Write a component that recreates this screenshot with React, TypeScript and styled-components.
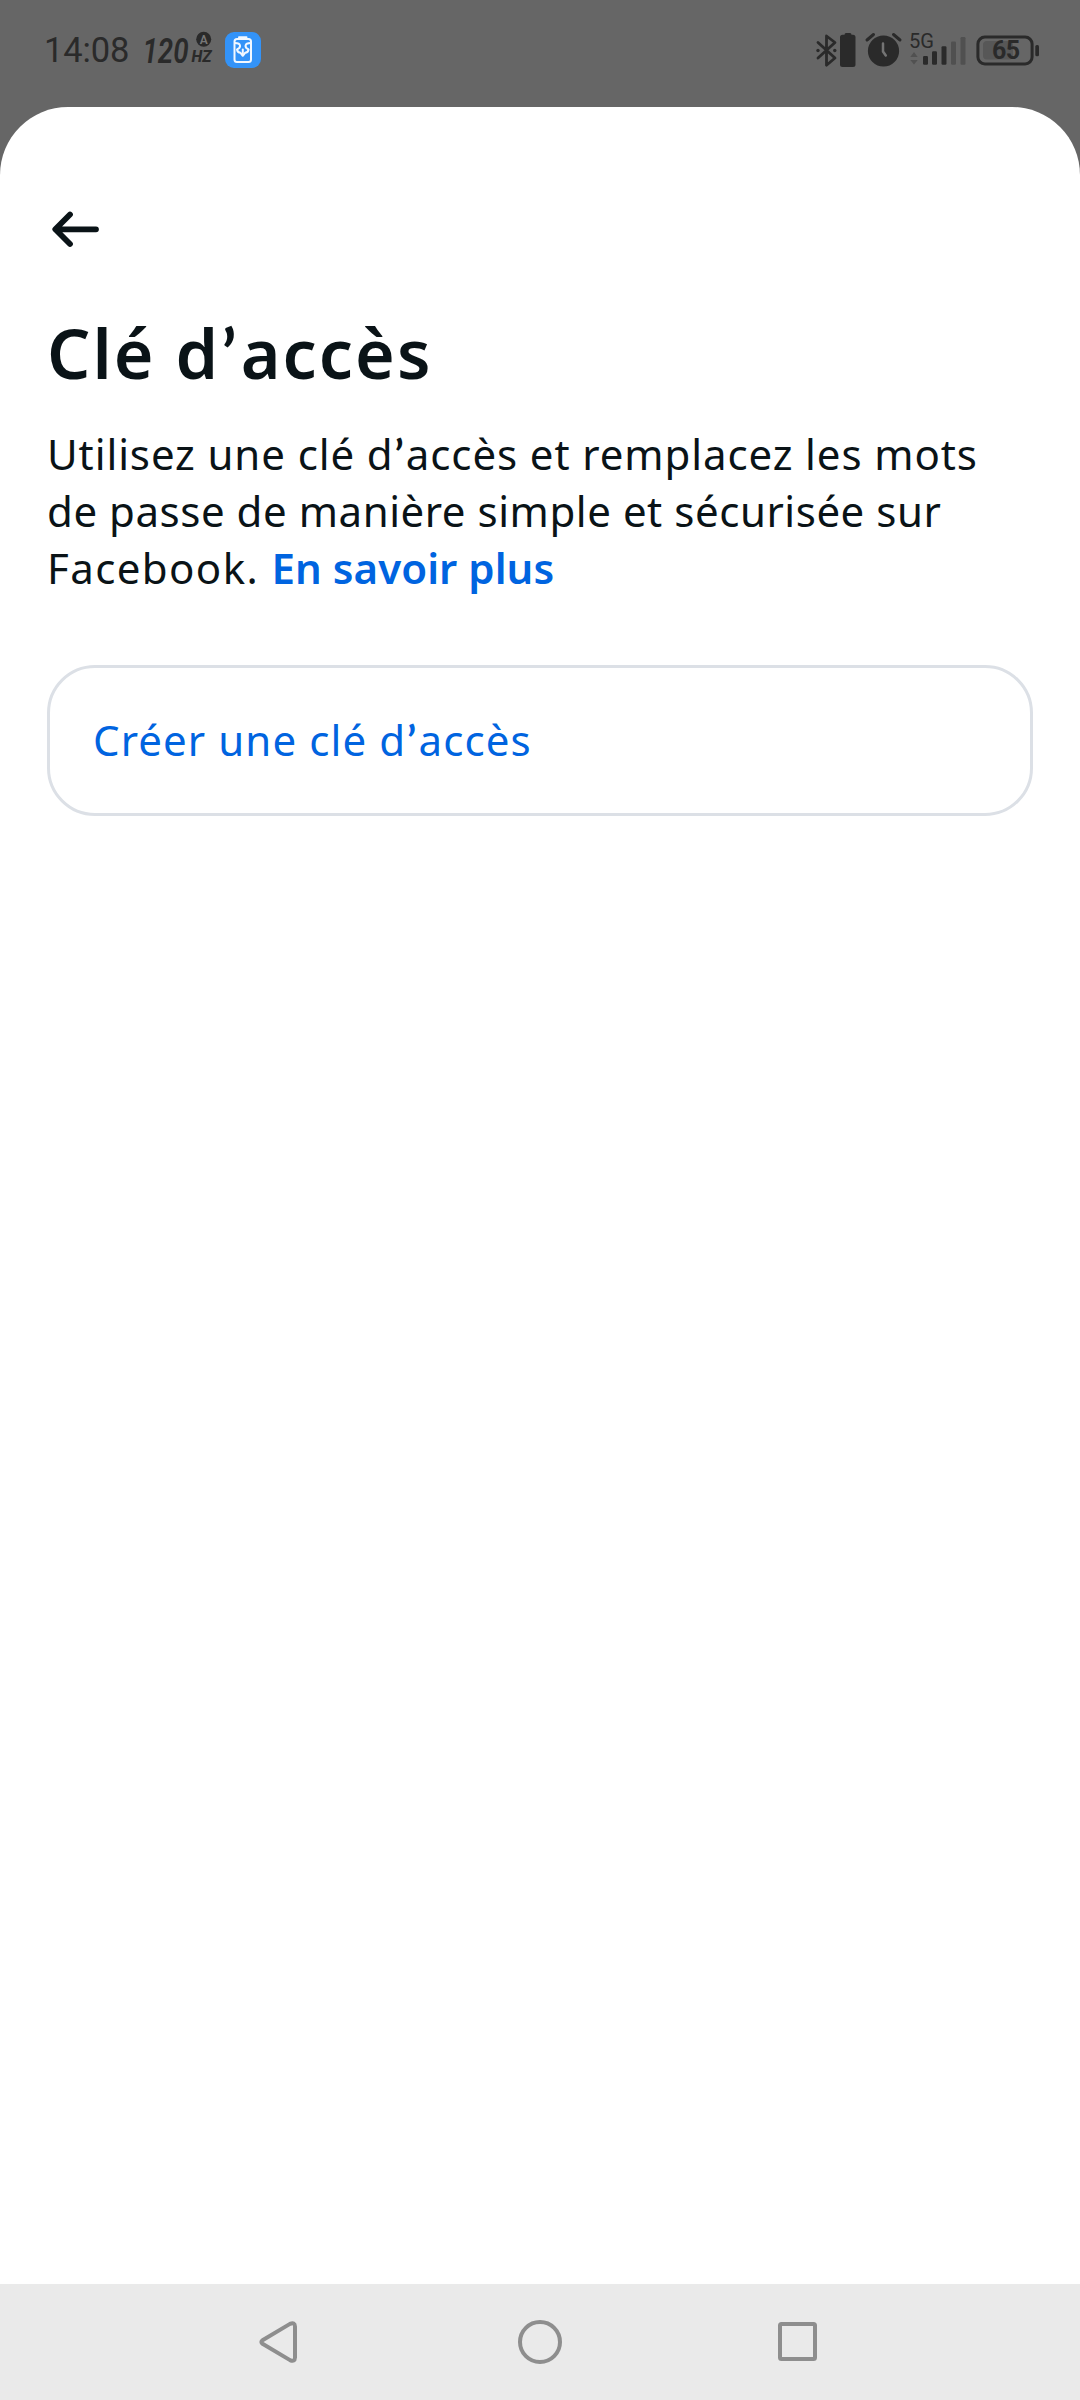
import React from "react";
import styled, { createGlobalStyle } from "styled-components";

const INK = "#0a1317";
const LINK = "#0064e0";
const STATUS_INK = "#2a2a2a";

const GlobalStyle = createGlobalStyle`
  *, *::before, *::after { box-sizing: border-box; }
  body { margin: 0; background: #666666; font-family: "Noto Sans", "Open Sans", sans-serif; }
`;

const Screen = styled.div`
  display: flex;
  flex-direction: column;
  width: 1080px;
  height: 2400px;
  overflow: hidden;
  background: #666666;
`;

const StatusBar = styled.header`
  display: flex;
  justify-content: space-between;
  align-items: flex-start;
  height: 107px;
  padding: 30px 40px 0 44px;
`;

const StatusGroup = styled.div`
  display: flex;
  align-items: center;
  height: 40px;
`;

const Clock = styled.time`
  width: 98px;
  font: 400 34.5px/40px Roboto, sans-serif;
  letter-spacing: -0.1px;
  color: ${STATUS_INK};
  white-space: nowrap;
`;

const Glyph = styled.svg<{ $gap?: number }>`
  display: block;
  flex: none;
  overflow: visible;
  margin-right: ${({ $gap = 0 }) => $gap}px;
`;

const Sheet = styled.main`
  display: flex;
  flex-direction: column;
  flex: 1;
  padding: 96px 47px 0;
  border-radius: 68px 68px 0 0;
  background: #ffffff;
`;

const BackButton = styled.button`
  display: flex;
  align-items: center;
  width: 56px;
  height: 52px;
  padding: 0;
  border: 0;
  background: none;
`;

const Title = styled.h1`
  margin: 54px 0 0;
  font-size: 68px;
  font-weight: 600;
  line-height: 88px;
  letter-spacing: 2.1px;
  color: ${INK};
  white-space: nowrap;
`;

const Intro = styled.p`
  margin: 28px 0 0;
  font-size: 42px;
  line-height: 57px;
  color: ${INK};
`;

const Line = styled.span<{ $tracking: number }>`
  display: block;
  letter-spacing: ${({ $tracking }) => $tracking}px;
  white-space: nowrap;
`;

const Apostrophe = styled.span`
  margin: 0 0.03em 0 0.02em;
  font-family: Lato, "Noto Sans", sans-serif;
  font-weight: 700;
  line-height: 1;
`;

const LearnMore = styled.a<{ $tracking: number }>`
  font-weight: 600;
  letter-spacing: ${({ $tracking }) => $tracking}px;
  color: ${LINK};
`;

const CreateCard = styled.button`
  display: flex;
  align-items: center;
  height: 151px;
  margin: 69px 0 0;
  padding: 0 43px 2px;
  border: 3px solid #dce0e6;
  border-radius: 48px;
  background: #ffffff;
  font-family: inherit;
  font-size: 42px;
  line-height: 57px;
  letter-spacing: 1.1px;
  color: ${LINK};
`;

const NavBar = styled.nav`
  display: flex;
  justify-content: space-between;
  align-items: center;
  height: 116px;
  padding: 0 258px;
  background: #eaeaea;
`;

function RefreshRate() {
  return (
    <Glyph width="74" height="40" viewBox="142 30 74 40" $gap={9}>
      <g fill={STATUS_INK} fontFamily="Roboto, sans-serif" fontStyle="italic">
        <text x="142.500" y="63" fontSize="35" fontWeight="600" textLength="46" lengthAdjust="spacingAndGlyphs">120</text>
        <text x="191.500" y="62" fontSize="16.500" fontWeight="800" textLength="20" lengthAdjust="spacingAndGlyphs">HZ</text>
      </g>
      <circle cx="203.7" cy="39.3" r="7.5" fill={STATUS_INK} />
      <text x="203.7" y="43.5" fontSize="12" fontWeight="600" textAnchor="middle" fill="#777" fontFamily="Roboto, sans-serif">A</text>
    </Glyph>
  );
}

function BatteryCare() {
  return (
    <Glyph width="36" height="36" viewBox="0 0 36 36">
      <rect width="36" height="36" rx="9" fill="#3393f8" />
      <g fill="none" stroke="#f2f8ff" strokeWidth="2" strokeLinejoin="round" strokeLinecap="round">
        <rect x="9.5" y="7" width="16.5" height="23" rx="2.5" />
        <path d="M14 5.3h7.5" />
        <path d="M10 11q4.500 0 5 2.500t-3 4q.5 3 3.500 3.300l2.300 3 2.300-3q3-.3 3.500-3.300-3.500-1.500-3-4t5-2.500" />
        <path d="M17.800 17.500v5.500" />
      </g>
    </Glyph>
  );
}

function Bluetooth() {
  return (
    <Glyph width="22" height="34" viewBox="815 33 22 34" $gap={3}>
      <path d="M818 42.500l17 15.500-8.500 7.200V36l8.500 6.500-17 15.500" fill="none" stroke={STATUS_INK} strokeWidth="2.800" strokeLinejoin="round" strokeLinecap="round" />
      <circle cx="818" cy="50.500" r="1.700" fill={STATUS_INK} />
      <circle cx="834.800" cy="50.500" r="1.700" fill={STATUS_INK} />
    </Glyph>
  );
}

function DeviceBattery() {
  return (
    <Glyph width="16" height="34" viewBox="0 0 16 34" $gap={9}>
      <path d="M4.500 1.800Q4.500 0 6 0h4q1.500 0 1.500 1.800H13q2.500 0 2.500 2.500V31.500q0 2.500-2.500 2.500H2.500Q0 34 0 31.500V4.300q0-2.500 2.500-2.500z" fill={STATUS_INK} />
    </Glyph>
  );
}

function Alarm() {
  return (
    <Glyph width="37" height="34" viewBox="865 33 37 34" $gap={7}>
      <circle cx="883.500" cy="51" r="15.600" fill={STATUS_INK} />
      <path d="M867 40l6.500-5.500M893.500 34.500l6.500 5.500" stroke={STATUS_INK} strokeWidth="3" strokeLinecap="round" />
      <path d="M883 43.500v8l2.800 4" fill="none" stroke="#747474" strokeWidth="2.500" strokeLinecap="round" />
    </Glyph>
  );
}

const SIGNAL = [
  { x: 923, y: 56, on: true },
  { x: 932, y: 51.3, on: true },
  { x: 941.5, y: 46.3, on: true },
  { x: 951, y: 41.500, on: false },
  { x: 960.500, y: 37, on: false },
];

function Signal() {
  return (
    <Glyph width="58" height="34" viewBox="909 33 58 34" $gap={9}>
      <text x="909" y="48" fontFamily="Roboto, sans-serif" fontSize="19.500" textLength="25" lengthAdjust="spacingAndGlyphs" fill={STATUS_INK}>5G</text>
      <path d="M910.300 57l3.700-5 3.700 5zM910.300 60l3.700 4.500 3.700-4.500z" fill="#515151" />
      {SIGNAL.map((bar) => (
        <rect key={bar.x} x={bar.x} y={bar.y} width="5" height={64.800 - bar.y} rx="1.200" fill={bar.on ? STATUS_INK : "#505050"} />
      ))}
    </Glyph>
  );
}

function MainBattery() {
  return (
    <Glyph width="64" height="34" viewBox="976 33 64 34">
      <rect x="983" y="41" width="30" height="18.500" rx="4" fill="#575757" />
      <rect x="977.900" y="37.100" width="54.200" height="26.800" rx="7" fill="none" stroke={STATUS_INK} strokeWidth="3" />
      <rect x="1035.300" y="45" width="3.700" height="11.300" rx="1.500" fill={STATUS_INK} />
      <text x="1006" y="59" fontFamily="Roboto, sans-serif" fontWeight="700" fontSize="25" textAnchor="middle" textLength="28" fill={STATUS_INK}>65</text>
    </Glyph>
  );
}

export default function App() {
  return (
    <Screen>
      <GlobalStyle />
      <StatusBar>
        <StatusGroup>
          <Clock>14:08</Clock>
          <RefreshRate />
          <BatteryCare />
        </StatusGroup>
        <StatusGroup>
          <Bluetooth />
          <DeviceBattery />
          <Alarm />
          <Signal />
          <MainBattery />
        </StatusGroup>
      </StatusBar>
      <Sheet>
        <BackButton aria-label="Retour">
          <Glyph width="56" height="52" viewBox="47 203 56 52">
            <path d="M96 229.300H55.500M70 214.500L55.300 229.300 70 244" fill="none" stroke={INK} strokeWidth="5.800" strokeLinecap="round" strokeLinejoin="round" />
          </Glyph>
        </BackButton>
        <Title>Clé d<Apostrophe>’</Apostrophe>accès</Title>
        <Intro>
          <Line $tracking={0.9}>Utilisez une clé d<Apostrophe>’</Apostrophe>accès et remplacez les mots</Line>
          <Line $tracking={0.55}>de passe de manière simple et sécurisée sur</Line>
          <Line $tracking={1.4}>
            Facebook. <LearnMore $tracking={0.05}>En savoir plus</LearnMore>
          </Line>
        </Intro>
        <CreateCard>
          <span>Créer une clé d<Apostrophe>’</Apostrophe>accès</span>
        </CreateCard>
      </Sheet>
      <NavBar>
        <Glyph width="46" height="46" viewBox="258 2319 46 46">
          <path d="M262.500 2340.200l27.500-16.300q4.800-2.300 5 2.600v31q-.2 4.900-5 2.600l-27.500-16.300q-2.300-1.700 0-3.600z" fill="none" stroke="#8e8e8e" strokeWidth="4" strokeLinejoin="round" />
        </Glyph>
        <Glyph width="46" height="46" viewBox="0 0 46 46">
          <circle cx="23" cy="23" r="20" fill="none" stroke="#8e8e8e" strokeWidth="4" />
        </Glyph>
        <Glyph width="46" height="46" viewBox="776 2319 46 46">
          <rect x="780" y="2324" width="35" height="35" rx="1.500" fill="none" stroke="#8e8e8e" strokeWidth="4" />
        </Glyph>
      </NavBar>
    </Screen>
  );
}
